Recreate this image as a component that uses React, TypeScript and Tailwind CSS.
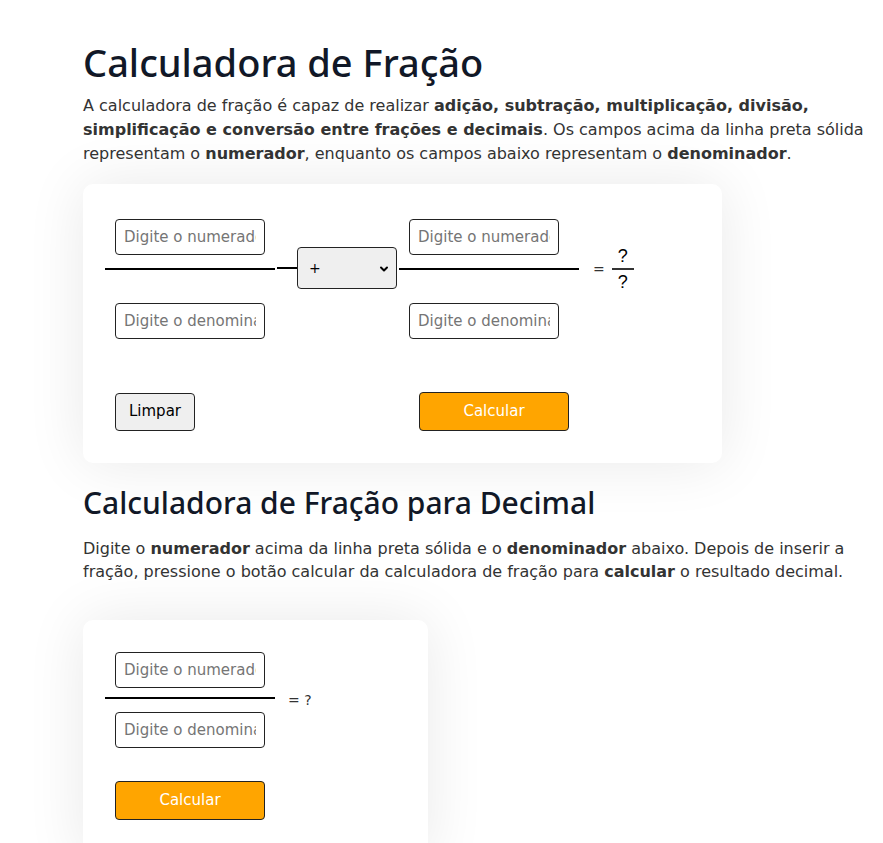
import React from "react";

const body = "font-['DejaVu_Sans',sans-serif]";
const head = "font-['Noto_Sans',sans-serif]";

const inputCls =
  "w-[150px] h-[36px] rounded-[4px] border border-[#222] bg-white px-2 text-[15px] text-[#222] placeholder:text-[#757575] outline-none";

function NumInput({ placeholder }: { placeholder: string }) {
  return <input type="text" placeholder={placeholder} className={inputCls} />;
}

function Fraction({ width, pr }: { width: string; pr: string }) {
  return (
    <div className={`flex flex-col ${width}`}>
      <div className={`pl-[10px] ${pr}`}>
        <NumInput placeholder="Digite o numerador" />
      </div>
      <div className="h-[2px] bg-black mt-[13px]" />
      <div className={`pl-[10px] ${pr} mt-[33px]`}>
        <NumInput placeholder="Digite o denominador" />
      </div>
    </div>
  );
}

export default function App() {
  return (
    <div className={`bg-white min-h-[843px] ${body} text-[#333]`}>
      <div className="pl-[83px] w-[883px] pt-[36px]">
        <h1 className={`${head} text-[38px] font-medium leading-[52px] text-[#111827]`}>
          Calculadora de Fração
        </h1>
        <p className="mt-[6px] text-[16px] leading-[24px] text-[#333]">
          A calculadora de fração é capaz de realizar{" "}
          <b>adição, subtração, multiplicação, divisão, simplificação e conversão entre frações e decimais</b>. Os
          campos acima da linha preta sólida representam o <b>numerador</b>, enquanto os campos abaixo representam o{" "}
          <b>denominador</b>.
        </p>

        <div className="mt-[18px] w-[639px] h-[279px] rounded-[10px] bg-white shadow-[0_0_60px_rgba(0,0,0,0.09)] pl-[22px] pt-[35px]">
          <div className="flex items-start">
            <Fraction width="w-[170px]" pr="pr-[10px]" />
            <div className="flex items-center mt-[28px] ml-[2px]">
              <div className="w-[20px] h-[2px] bg-black" />
              <div className="relative w-[100px] h-[42px] rounded-[4px] border border-[#222] bg-[#efefef] flex items-center px-[11px] text-[14px] text-black">
                +
                <svg className="absolute right-[6px] top-[15px]" width="12" height="12" viewBox="0 0 24 24" fill="none" stroke="black" strokeWidth="4" strokeLinecap="round" strokeLinejoin="round">
                  <path d="M6 9l6 6 6-6" />
                </svg>
              </div>
              <div className="w-[2px] h-[2px]" />
            </div>
            <Fraction width="w-[180px]" pr="pr-[20px]" />
            <div className="flex items-center mt-[28px] ml-[14px] text-[#333]">
              <span className="text-[14px]">=</span>
              <div className="ml-[7px] flex flex-col items-center w-[22px] font-['Liberation_Sans',sans-serif] text-[18px] leading-[18px] text-black">
                <span>?</span>
                <div className="w-full h-[2px] bg-[#333] my-[3px]" />
                <span>?</span>
              </div>
            </div>
          </div>
          <div className="flex items-center mt-[53px] ml-[10px]">
            <button className="w-[80px] h-[38px] rounded-[4px] border border-[#222] bg-[#efefef] text-[15px] text-black">
              Limpar
            </button>
            <button className="ml-[224px] w-[150px] h-[39px] rounded-[4px] border border-[#222] bg-[#ffa500] text-[15px] text-white">
              Calcular
            </button>
          </div>
        </div>

        <h2 className={`${head} mt-[18px] text-[30px] font-medium leading-[44px] text-[#111827]`}>
          Calculadora de Fração para Decimal
        </h2>
        <p className="mt-[12px] text-[16px] leading-[23px] text-[#333]">
          Digite o <b>numerador</b> acima da linha preta sólida e o <b>denominador</b> abaixo. Depois de inserir a
          fração, pressione o botão calcular da calculadora de fração para <b>calcular</b> o resultado decimal.
        </p>

        <div className="mt-[37px] w-[345px] h-[240px] rounded-t-[10px] bg-white shadow-[0_0_60px_rgba(0,0,0,0.09)] pl-[22px] pt-[32px]">
          <div className="flex items-center">
            <div className="flex flex-col w-[170px]">
              <div className="pl-[10px]">
                <input type="text" placeholder="Digite o numerador" className={inputCls} />
              </div>
              <div className="h-[2px] bg-black mt-[9px]" />
              <div className="pl-[10px] mt-[13px]">
                <input type="text" placeholder="Digite o denominador" className={inputCls} />
              </div>
            </div>
            <span className="ml-[13px] text-[14px] text-[#333]">= ?</span>
          </div>
          <button className="ml-[10px] mt-[33px] w-[150px] h-[39px] rounded-[4px] border border-[#222] bg-[#ffa500] text-[15px] text-white">
            Calcular
          </button>
        </div>
      </div>
    </div>
  );
}
